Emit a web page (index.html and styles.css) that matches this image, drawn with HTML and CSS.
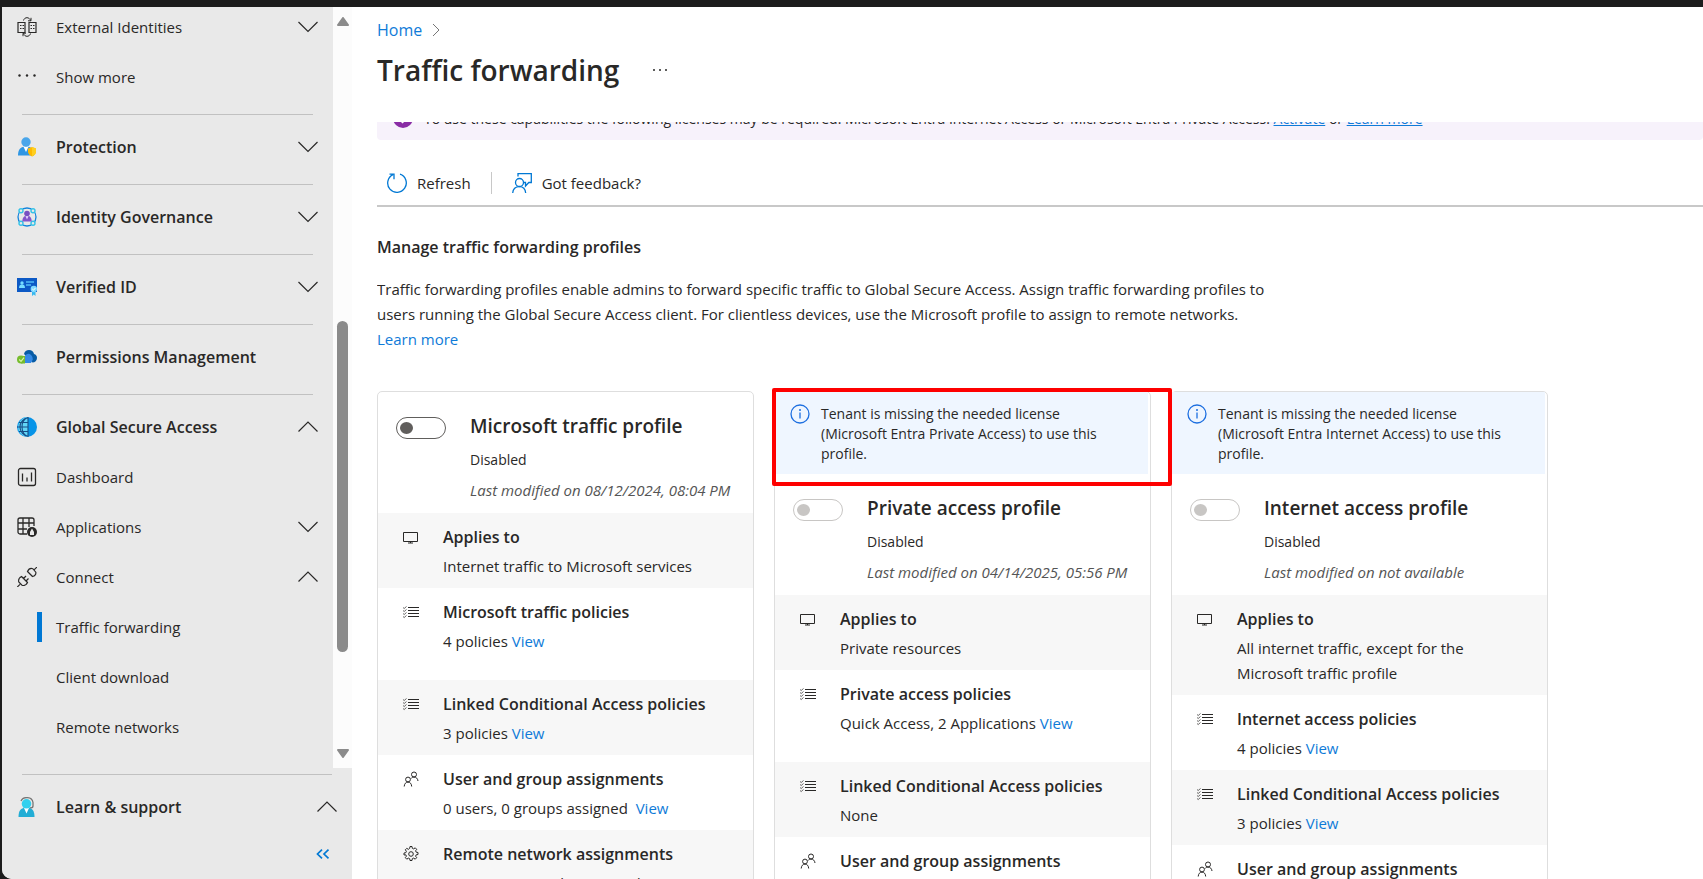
FILE: index.html
```html
<!DOCTYPE html>
<html lang="en">
<head>
  <title>Traffic forwarding</title>
  <meta charset="UTF-8">
  <link rel="stylesheet" href="styles.css">
</head>
<body>
<svg class="sprite" aria-hidden="true">
  <symbol id="down" viewBox="0 0 20 20"><path d="M0.5 5l9.5 9.5L19.5 5" fill="none" stroke="currentColor" stroke-width="1.2"/></symbol>
  <symbol id="up" viewBox="0 0 20 20"><path d="M0.5 14.5L10 5l9.5 9.5" fill="none" stroke="currentColor" stroke-width="1.2"/></symbol>
  <symbol id="monitor" viewBox="0 0 16 16"><path d="M.5 3.5h14v9H.5zM7.5 12.5v1.500M5 14h5" fill="none" stroke="currentColor"/></symbol>
  <symbol id="list" viewBox="0 0 16 16">
    <path d="M5 3.500h11M5 6.500h11M5 9.500h11M5 12.500h11" stroke="currentColor"/>
    <path d="M0 3.500l1.200 1L3.500 2.500M0 6.500l1.200 1L3.500 5.500M0 9.500l1.200 1L3.500 8.500M0 12.500l1.200 1L3.500 11.500" fill="none" stroke="currentColor" stroke-width=".7"/>
  </symbol>
  <symbol id="people" viewBox="0 0 16 16">
    <g fill="none" stroke="currentColor"><circle cx="5" cy="8.500" r="2.400"/><circle cx="11" cy="3.500" r="2.500"/><path d="M1.200 15.500c.2-3 1.800-4.400 3.800-4.400s3.500 1.400 3.700 4.400M8 7.500c.8-1 1.800-1.400 3-1.400 2.200 0 3.700 1.400 4 3.900"/></g>
  </symbol>
  <symbol id="gear" viewBox="0 0 16 16">
    <g fill="none" stroke="currentColor"><circle cx="8" cy="8" r="2.300"/><path d="M6.700 2.300l.3-1.800h2l.3 1.800 1.400.6 1.500-1.100 1.500 1.500-1.100 1.500.6 1.400 1.800.3v2l-1.800.3-.6 1.400 1.100 1.500-1.500 1.500-1.500-1.100-1.400.6-.3 1.800H7l-.3-1.800-1.400-.6-1.500 1.100-1.500-1.500 1.100-1.500-.6-1.400L1 9V7l1.800-.3.6-1.400-1.100-1.500 1.500-1.500 1.500 1.100z"/></g>
  </symbol>
  <symbol id="info" viewBox="0 0 20 20"><circle cx="10" cy="10" r="9" fill="none" stroke="currentColor" stroke-width="1.300"/><path d="M10 8.500v6" stroke="currentColor" stroke-width="1.300"/><circle cx="10" cy="6" r="1" fill="currentColor"/></symbol>
</svg>

<div class="app">
  <aside class="sidebar">
    <div class="sidebar-scroll">
      <nav class="nav">
        <button class="nav-item">
          <svg class="icon" viewBox="0 0 20 20" fill="none" stroke="currentColor"><path d="M8 5.500H1v10h7zM12 5.500h7v10h-7z" stroke-width="1.200"/><path d="M3 8.500h1.500M5.500 8.500H7M3 11.500h1.500M5.500 11.500H7M13.500 8.500H15M16 8.500h1.500M13.500 11.500H15M16 11.500h1.500"/><path d="M6.500 3.500C7 1.500 8.500.7 10 .7s3 1 3.500 2.800M14 .8v3h-3M13.500 16.500c-.5 2-2 2.800-3.500 2.800s-3-1-3.500-2.800M6 19.200v-3h3"/></svg>
          <span>External Identities</span>
          <svg class="chevron"><use href="#down"/></svg>
        </button>
        <button class="nav-item">
          <svg class="icon" viewBox="0 0 20 20" fill="currentColor"><circle cx="2.500" cy="8.500" r="1.200"/><circle cx="10" cy="8.500" r="1.200"/><circle cx="17.500" cy="8.500" r="1.200"/></svg>
          <span>Show more</span>
        </button>
        <hr>
        <button class="nav-item nav-section">
          <svg class="icon" viewBox="0 0 20 20"><path d="M1 18.500c0-6 2.500-9 8-9s8 3 8 9z" fill="#2f96e3"/><path d="M6.500 9.800L9 15l2.500-5.200z" fill="#fff"/><circle cx="9" cy="5" r="4.700" fill="#4aa6ea"/><path d="M15 10l4 1.500v3c0 2.300-1.500 4-4 5-2.500-1-4-2.700-4-5v-3z" fill="#ffb900"/><path d="M15 10l4 1.500v3c0 2.300-1.500 4-4 5z" fill="#ffcf1f"/></svg>
          <span>Protection</span>
          <svg class="chevron"><use href="#down"/></svg>
        </button>
        <hr>
        <button class="nav-item nav-section">
          <svg class="icon" viewBox="0 0 20 20"><circle cx="10" cy="10" r="9" fill="none" stroke="#1684dc" stroke-width="1.300"/><g fill="#e9e9e9" stroke="#35c3e8" stroke-width="1.400"><circle cx="4" cy="3.700" r="2"/><circle cx="16" cy="3.700" r="2"/><circle cx="4" cy="16.300" r="2"/><circle cx="16" cy="16.300" r="2"/></g><path d="M5.300 14.500C5.300 10.500 7 8.700 10 8.700s4.700 1.800 4.700 5.800z" fill="#8455cb"/><path d="M8.500 9L10 12.500 11.500 9z" fill="#eadcff"/><circle cx="10" cy="6.500" r="2.800" fill="#7950c2"/></svg>
          <span>Identity Governance</span>
          <svg class="chevron"><use href="#down"/></svg>
        </button>
        <hr>
        <button class="nav-item nav-section">
          <svg class="icon" viewBox="0 0 20 20"><path d="M0 1h20v14H0z" fill="#0c59c5"/><circle cx="5" cy="6" r="1.700" fill="#75dcff"/><path d="M2 11c0-2.500 1-3.500 3-3.500S8 8.500 8 11z" fill="#75dcff"/><path d="M9 5h8M9 8h5" stroke="#50b9f5" stroke-width="1.500"/><path d="M15 13v6l1.800-1.500L18.500 19v-6z" fill="#35b8ef"/><circle cx="16.800" cy="12" r="3.200" fill="#80daff"/><path d="M15.300 12l1.200 1.200 2-2.300" fill="none" stroke="#fff"/></svg>
          <span>Verified ID</span>
          <svg class="chevron"><use href="#down"/></svg>
        </button>
        <hr>
        <button class="nav-item nav-section">
          <svg class="icon" viewBox="0 0 20 20"><path d="M7 7c.5-2.500 2.500-4 5-4 2.500 0 4.500 1.500 5 4 2 .5 3 2 3 4 0 2.500-2 4.500-4.500 4.500z" fill="#075ba5"/><path d="M4 16c-1-4 1-6.500 4-6.500C9 6.500 12 6 14 8c1.500 1.200 1.500 2.500 1.800 4.500L14 16z" fill="#3489e6"/><circle cx="4" cy="12.500" r="4" fill="#76bc2d"/><path d="M4 9h4v7.500H4z" fill="#76bc2d"/><path d="M2.200 12.500L4 14.300l3-3.600" fill="none" stroke="#d9f5aa" stroke-width="1.200"/></svg>
          <span>Permissions Management</span>
        </button>
        <hr>
        <button class="nav-item nav-section">
          <svg class="icon" viewBox="0 0 20 20"><circle cx="10" cy="10" r="10" fill="#0794e8"/><path d="M11 0A10 10 0 0 0 11 20z" fill="#62d5f7"/><path d="M11 .5C3 3.500 3 16.500 11 19.500M11 0v20M2 5.500h9M0 10h11M2 14.500h9M11 .7A9.400 9.400 0 0 0 11 19.300" fill="none" stroke="#174d86" stroke-width="1.100"/></svg>
          <span>Global Secure Access</span>
          <svg class="chevron"><use href="#up"/></svg>
        </button>
        <button class="nav-item">
          <svg class="icon" viewBox="0 0 20 20" fill="none" stroke="currentColor" stroke-width="1.300"><rect x="1.500" y="1.500" width="17" height="17" rx="2"/><path d="M5.500 6.500v8M10 10.500v4M14.500 5.500v9"/></svg>
          <span>Dashboard</span>
        </button>
        <button class="nav-item">
          <svg class="icon" viewBox="0 0 20 20"><path d="M10 17H3a2 2 0 0 1-2-2V3a2 2 0 0 1 2-2h12a2 2 0 0 1 2 2v6M6 1v16M12 1v9M1 6h16M1 12h9" fill="none" stroke="currentColor" stroke-width="1.300"/><circle cx="15" cy="15" r="5" fill="currentColor"/><path d="M15 11.500l2 3.500v3h-4v-3z" fill="#e9e9e9"/></svg>
          <span>Applications</span>
          <svg class="chevron"><use href="#down"/></svg>
        </button>
        <button class="nav-item">
          <svg class="icon" viewBox="0 0 20 20" fill="none" stroke="currentColor" stroke-width="1.200"><path d="M10.500 4.500l5 5c2.500-.5 3.700-2.500 3.300-4.300L15.800 1.700c-2-.6-4.300.5-5.300 2.800zM17.300 2.700L20 0M4.500 9.500l6 6c-1 2.300-3.500 3.400-5.500 2.700L1.800 15C1.200 13 2.300 10.500 4.500 9.500zM3 17.300L.3 20M6.500 11.500L9 9M9 14l2.500-2.500"/></svg>
          <span>Connect</span>
          <svg class="chevron"><use href="#up"/></svg>
        </button>
        <a class="nav-link active" href="#">Traffic forwarding</a>
        <a class="nav-link" href="#">Client download</a>
        <a class="nav-link" href="#">Remote networks</a>
      </nav>
      <div class="scrollbar">
        <svg class="arrow" viewBox="0 0 14 10"><path d="M7 1l5 7H2z" fill="#8b8b8b" stroke="#8b8b8b" stroke-width="2" stroke-linejoin="round"/></svg>
        <div class="track"><div class="thumb"></div></div>
        <svg class="arrow" viewBox="0 0 14 10"><path d="M7 9l5-7H2z" fill="#8b8b8b" stroke="#8b8b8b" stroke-width="2" stroke-linejoin="round"/></svg>
      </div>
    </div>
    <div class="sidebar-footer">
      <hr>
      <button class="nav-item nav-section">
        <svg class="icon" viewBox="0 0 20 20"><path d="M4 4C6-.5 15-1 16 5.500V9c0 1.500-1 2-3 2" fill="none" stroke="#777" stroke-width="1.300"/><path d="M1.500 20c0-6 2-9.500 8-9.500s8 3.500 8 9.500z" fill="#22add5"/><path d="M7 11l2.500 5.500L12 11z" fill="#fff"/><circle cx="9.500" cy="6.800" r="4.800" fill="#32d0ee"/></svg>
        <span>Learn &amp; support</span>
        <svg class="chevron"><use href="#up"/></svg>
      </button>
      <button class="collapse" aria-label="Collapse menu">
        <svg viewBox="0 0 14 10" fill="none" stroke="currentColor" stroke-width="1.700"><path d="M6 .7L1.500 5 6 9.300M12.500 .7L8 5l4.500 4.300"/></svg>
      </button>
    </div>
  </aside>

  <main class="main">
    <header class="header">
      <div class="breadcrumb">
        <a href="#">Home</a>
        <svg viewBox="0 0 8 14" fill="none" stroke="#767676"><path d="M1 1l6 6-6 6"/></svg>
      </div>
      <div class="title-row">
        <h1>Traffic forwarding</h1>
        <button class="more" aria-label="More">
          <svg viewBox="0 0 14 4" fill="currentColor"><circle cx="1" cy="2" r="1"/><circle cx="7" cy="2" r="1"/><circle cx="13" cy="2" r="1"/></svg>
        </button>
      </div>
    </header>

    <div class="content">
      <div class="license">
        <svg viewBox="0 0 20 20"><circle cx="10" cy="10" r="10" fill="#8a2da5"/><path d="M6 12l6-6 2 2-6 6M9 15l5-5" fill="none" stroke="#fff" stroke-width="1.500"/></svg>
        <p>To use these capabilities the following licenses may be required: Microsoft Entra Internet Access or Microsoft Entra Private Access. <a href="#">Activate</a> or <a href="#">Learn more</a></p>
      </div>
      <div class="toolbar">
        <button>
          <svg viewBox="0 0 20 20" fill="none" stroke="currentColor" stroke-width="1.300"><path d="M13 1.200A9.300 9.300 0 1 1 6 1.600M2.500 1.200H7v5"/></svg>
          Refresh
        </button>
        <button>
          <svg viewBox="0 0 20 20" fill="none" stroke="currentColor" stroke-width="1.300"><circle cx="7.500" cy="9.500" r="4"/><path d="M.7 20c.3-4 3-6.400 6.800-6.400S13.300 16 13.700 20M6 3.500V.7h13.300v8.800h-2.500L13.500 13V9.500H12"/></svg>
          Got feedback?
        </button>
      </div>

      <h2>Manage traffic forwarding profiles</h2>
      <p class="intro">Traffic forwarding profiles enable admins to forward specific traffic to Global Secure Access. Assign traffic forwarding profiles to users running the Global Secure Access client. For clientless devices, use the Microsoft profile to assign to remote networks. <br><a href="#">Learn more</a></p>

      <div class="cards">
        <section class="card">
          <div class="card-head">
            <input class="toggle" type="checkbox" role="switch" id="microsoft">
            <div>
              <label for="microsoft">Microsoft traffic profile</label>
              <p>Disabled</p>
              <p class="modified">Last modified on 08/12/2024, 08:04 PM</p>
            </div>
          </div>
          <div class="row">
            <svg><use href="#monitor"/></svg>
            <div>
              <h3>Applies to</h3>
              <p>Internet traffic to Microsoft services</p>
            </div>
          </div>
          <div class="row row-tall">
            <svg><use href="#list"/></svg>
            <div>
              <h3>Microsoft traffic policies</h3>
              <p>4 policies <a href="#">View</a></p>
            </div>
          </div>
          <div class="row">
            <svg><use href="#list"/></svg>
            <div>
              <h3>Linked Conditional Access policies</h3>
              <p>3 policies <a href="#">View</a></p>
            </div>
          </div>
          <div class="row">
            <svg><use href="#people"/></svg>
            <div>
              <h3>User and group assignments</h3>
              <p>0 users, 0 groups assigned &nbsp;<a href="#">View</a></p>
            </div>
          </div>
          <div class="row">
            <svg><use href="#gear"/></svg>
            <div>
              <h3>Remote network assignments</h3>
              <p>0 remote networks assigned &nbsp;<a href="#">View</a></p>
            </div>
          </div>
        </section>

        <section class="card highlighted">
          <div class="notice">
            <svg><use href="#info"/></svg>
            <p>Tenant is missing the needed license (Microsoft Entra Private Access) to use this profile.</p>
          </div>
          <div class="card-head">
            <input class="toggle" type="checkbox" role="switch" id="private" disabled>
            <div>
              <label for="private">Private access profile</label>
              <p>Disabled</p>
              <p class="modified">Last modified on 04/14/2025, 05:56 PM</p>
            </div>
          </div>
          <div class="row">
            <svg><use href="#monitor"/></svg>
            <div>
              <h3>Applies to</h3>
              <p>Private resources</p>
            </div>
          </div>
          <div class="row row-tall">
            <svg><use href="#list"/></svg>
            <div>
              <h3>Private access policies</h3>
              <p>Quick Access, 2 Applications <a href="#">View</a></p>
            </div>
          </div>
          <div class="row">
            <svg><use href="#list"/></svg>
            <div>
              <h3>Linked Conditional Access policies</h3>
              <p>None</p>
            </div>
          </div>
          <div class="row">
            <svg><use href="#people"/></svg>
            <div>
              <h3>User and group assignments</h3>
            </div>
          </div>
        </section>

        <section class="card">
          <div class="notice">
            <svg><use href="#info"/></svg>
            <p>Tenant is missing the needed license (Microsoft Entra Internet Access) to use this profile.</p>
          </div>
          <div class="card-head">
            <input class="toggle" type="checkbox" role="switch" id="internet" disabled>
            <div>
              <label for="internet">Internet access profile</label>
              <p>Disabled</p>
              <p class="modified">Last modified on not available</p>
            </div>
          </div>
          <div class="row">
            <svg><use href="#monitor"/></svg>
            <div>
              <h3>Applies to</h3>
              <p>All internet traffic, except for the Microsoft traffic profile</p>
            </div>
          </div>
          <div class="row">
            <svg><use href="#list"/></svg>
            <div>
              <h3>Internet access policies</h3>
              <p>4 policies <a href="#">View</a></p>
            </div>
          </div>
          <div class="row">
            <svg><use href="#list"/></svg>
            <div>
              <h3>Linked Conditional Access policies</h3>
              <p>3 policies <a href="#">View</a></p>
            </div>
          </div>
          <div class="row">
            <svg><use href="#people"/></svg>
            <div>
              <h3>User and group assignments</h3>
            </div>
          </div>
        </section>
      </div>
    </div>
  </main>
</div>
</body>
</html>
```

FILE: styles.css
```css
* {
  box-sizing: border-box;
}

body {
  margin: 0;
  height: 100vh;
  padding: 7px 0 0 2px;
  overflow: hidden;
  background: #1c1c1c;
  color: #292827;
  font-family: "Segoe UI", "Open Sans", "Noto Sans", sans-serif;
  font-size: 15px;
}

h1, h2, h3, p {
  margin: 0;
}

a {
  color: #0f7bd8;
  text-decoration: none;
}

button {
  border: 0;
  padding: 0;
  background: none;
  color: inherit;
  font: inherit;
  text-align: left;
}

svg {
  display: block;
  flex: none;
}

.sprite {
  display: none;
}

.app {
  display: flex;
  height: 100%;
  background: #fff;
  border-bottom-left-radius: 10px;
  overflow: hidden;
}

/* sidebar */
.sidebar {
  display: flex;
  flex-direction: column;
  flex: none;
  width: 350px;
  background: #e9e9e9;
}

.sidebar-scroll {
  display: flex;
  flex: 1;
  min-height: 0;
}

.nav {
  flex: 1;
  margin-top: -5px;
}

.nav-item {
  display: flex;
  align-items: center;
  gap: 19px;
  width: 100%;
  height: 50px;
  padding: 0 15px;
}

.nav-section {
  font-size: 16px;
  font-weight: 600;
}

.nav-item .icon {
  width: 20px;
  height: 20px;
}

.chevron {
  width: 20px;
  height: 20px;
  margin-left: auto;
}

.sidebar hr {
  height: 1px;
  margin: 12px 20px 7px;
  border: 0;
  background: #c1c1c1;
}

.nav-link {
  display: flex;
  align-items: center;
  height: 50px;
  padding-left: 54px;
  color: inherit;
}

.nav-link.active {
  padding-left: 35px;
}

.nav-link.active::before {
  content: "";
  width: 5px;
  height: 30px;
  margin-right: 14px;
  background: #0078d4;
}

.scrollbar {
  display: flex;
  flex-direction: column;
  align-items: center;
  width: 19px;
  padding: 10px 0;
  background: #fcfcfc;
}

.arrow {
  width: 14px;
  height: 10px;
}

.track {
  display: flex;
  flex: 1;
  align-items: flex-end;
  padding-bottom: 96px;
}

.thumb {
  width: 11px;
  height: 53%;
  border-radius: 6px;
  background: #8b8b8b;
}

.sidebar-footer hr {
  margin-top: 6px;
}

.collapse {
  display: block;
  margin: 17px 22px 20px auto;
  color: #0078d4;
}

.collapse svg {
  width: 14px;
  height: 10px;
}

/* page */
.main {
  display: flex;
  flex-direction: column;
  flex: 1;
  min-width: 0;
  padding-left: 25px;
}

.header {
  padding: 11px 0 32px;
}

.breadcrumb {
  display: flex;
  align-items: center;
  gap: 10px;
  font-size: 16px;
  line-height: 24px;
}

.breadcrumb svg {
  width: 8px;
  height: 14px;
}

.title-row {
  display: flex;
  align-items: center;
  gap: 34px;
  margin-top: 8px;
}

h1 {
  font-size: 28px;
  font-weight: 600;
  line-height: 40px;
}

.more svg {
  width: 14px;
  height: 4px;
}

.content {
  flex: 1;
  min-height: 0;
  overflow: hidden;
}

.license {
  display: flex;
  align-items: center;
  gap: 11px;
  height: 40px;
  margin-top: -22px;
  padding: 0 0 4px 16px;
  border-radius: 4px;
  background: #f7f2fb;
  font-size: 14px;
  white-space: nowrap;
}

.license svg {
  width: 20px;
  height: 20px;
}

.license a {
  text-decoration: underline;
}

.toolbar {
  display: flex;
  align-items: center;
  height: 46px;
  margin-top: 21px;
  border-bottom: 2px solid #c8c8c8;
}

.toolbar button {
  display: flex;
  align-items: center;
  gap: 10px;
  height: 22px;
  padding: 0 20px 0 10px;
}

.toolbar button + button {
  padding-left: 20px;
  border-left: 1px solid #c8c8c8;
}

.toolbar svg {
  width: 20px;
  height: 20px;
  color: #0078d4;
}

h2 {
  margin-top: 28px;
  font-size: 16px;
  font-weight: 600;
  line-height: 24px;
}

.intro {
  max-width: 920px;
  margin-top: 18px;
  line-height: 25px;
}

/* profile cards */
.cards {
  display: grid;
  grid-template-columns: repeat(3, 1fr);
  gap: 20px;
  max-width: 1171px;
  margin-top: 39px;
}

.card {
  position: relative;
  border: 1px solid #dedede;
  border-radius: 5px;
}

.card-head {
  display: flex;
  gap: 24px;
  padding: 20px 18px 13px;
  font-size: 14px;
  line-height: 20px;
}

.card-head label {
  display: block;
  font-size: 19px;
  font-weight: 600;
  line-height: 28px;
}

.card-head p {
  margin-top: 10px;
}

.card-head .modified {
  color: #555;
  font-size: 15px;
  font-style: italic;
}

.toggle {
  appearance: none;
  flex: none;
  width: 50px;
  height: 22px;
  margin: 5px 0 0;
  padding: 4px 3px;
  border: 1px solid #605e5c;
  border-radius: 11px;
}

.toggle::before {
  content: "";
  display: block;
  width: 13px;
  height: 12px;
  border-radius: 50%;
  background: #605e5c;
}

.toggle:checked::before {
  margin-left: auto;
}

.toggle:disabled {
  border-color: #c8c6c4;
}

.toggle:disabled::before {
  background: #c8c6c4;
}

.row {
  display: flex;
  gap: 24px;
  padding: 12px 25px 9px;
  line-height: 25px;
}

.row:nth-child(odd of .row) {
  background: #f7f7f7;
}

.row-tall {
  padding-bottom: 26px;
}

.row svg {
  width: 16px;
  height: 16px;
  margin-top: 4px;
}

.row h3 {
  margin-bottom: 5px;
  font-size: 16px;
  font-weight: 600;
  line-height: 24px;
}

.notice {
  display: flex;
  gap: 11px;
  margin-right: 2px;
  padding: 12px 40px 10px 15px;
  background: #eff6ff;
  font-size: 14px;
  line-height: 20px;
}

.notice svg {
  width: 20px;
  height: 20px;
  color: #1d6fe0;
}

/* red frame round the license notice */
.highlighted::after {
  content: "";
  position: absolute;
  top: -4px;
  left: -3px;
  right: -22px;
  height: 90px;
  border: 4px solid #fe0000;
  border-radius: 2px;
  z-index: 1;
}
```
